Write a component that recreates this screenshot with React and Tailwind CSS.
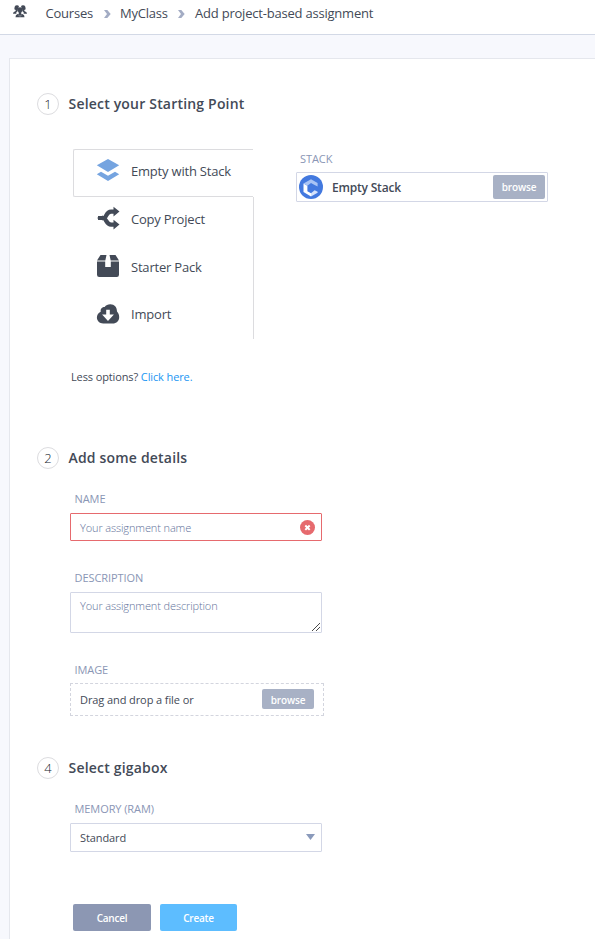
import React from 'react';

function UsersIcon() {
  return (
    <svg className="h-[13px] w-[14px]" viewBox="0 0 42 39" fill="#434a57">
      <path d="M5 5q2-4 7-4 5 0 6 4l-3 6-1 8-4 3v4H0q0-5 4-6l4-2v-3l-4-2z" />
      <path d="M37 5q-2-4-7-4-5 0-6 4l3 6 1 8 4 3v4h10q0-5-4-6l-4-2v-3l4-2z" />
      <path d="M21 7c5 0 7 3 7 8 0 4-2 6-3.500 8v3l5 2q5 2 5 9h-27q0-7 5-9l5-2v-3C16 21 14 19 14 15c0-5 2-8 7-8z" />
      <path d="m16 27 3.500 4-1 6zM26 27l-3.500 4 1 6z" fill="#fff" opacity=".6" />
    </svg>
  );
}

function Chevron() {
  return (
    <svg className="mt-px h-[8px] w-[7px] shrink-0" viewBox="0 0 7 8" fill="#a3acc4">
      <path d="M0 0h3.300l3.400 4-3.400 4H0l3-4z" />
    </svg>
  );
}

function LayersIcon() {
  return (
    <svg className="-mt-[2px] size-6" viewBox="0 0 24 24" fill="#75a4e0">
      <path d="M12 1 23.200 7.300 12 14 .800 7.300z" />
      <path d="m.800 16.200 4.200-2.500L12 17.700l7-4 4.200 2.500L12 23z" />
    </svg>
  );
}

function ForkIcon() {
  return (
    <svg className="-mt-[2px] size-6" viewBox="0 0 24 24">
      <path
        d="M2 12h5.500C10.500 12 10 5.600 15 5.600h4M7 12c3.500 0 3 6.600 8 6.600h4"
        fill="none"
        stroke="#434a57"
        strokeWidth="4.200"
      />
      <path d="M17.500 0.700 23.500 5.600 17.500 10.500zM17.500 13.700 23.500 18.600 17.500 23.400zM0.800 12 7 9.500v5z" fill="#434a57" />
    </svg>
  );
}

function PackIcon() {
  return (
    <svg className="-mt-[2px] size-6" viewBox="0 0 24 24" fill="#434a57">
      <path d="M4.500 1h6L9.300 6.500H1zM13.500 1h6L23 6.500h-8.300z" />
      <path d="M1 7.600h8.200v5.300h5.600V7.600H23v13.200q0 2.200-2.200 2.200H3.200Q1 23 1 20.800z" />
    </svg>
  );
}

function ImportIcon() {
  return (
    <svg className="size-6" viewBox="0 0 24 24">
      <path
        d="M14.300 2.200c4.200 0 6.700 3 6.700 7.300 1.400 1.500 2.200 3.300 2.200 5.400 0 3.900-2.600 6.600-6.600 6.600H7.200C3.500 21.500.9 19 .9 15.600c0-2.800 1.500-5 3.800-5.900C4.300 6.500 6.200 5 8.600 5c1.300-1.900 3.300-2.800 5.700-2.800z"
        fill="#434a57"
      />
      <path d="M10.200 7.800h3.600v4.600h4.100L12 19l-5.900-6.600h4.100z" fill="#fff" />
    </svg>
  );
}

function StackLogo() {
  return (
    <svg className="size-6 shrink-0" viewBox="0 0 24 24">
      <circle cx="12" cy="12" r="12" fill="#4379df" />
      <path d="m4.500 8.500 3.900 2.200v5.500l3.600 2v3.200l-7.500-4.300z" fill="#fff" />
      <path d="M12 4.200 18.600 8v3.500l-3-1.600L12 8l-3.600 2.700-3.900-2.200z" fill="#a9c4f5" />
      <path d="m12 18.200 3.600-3 3 1.500v1L12 21.400z" fill="#d5e2fb" />
    </svg>
  );
}

function SectionTitle({ number, children }) {
  return (
    <div className="flex h-[22px] items-center">
      <span className="flex size-[22px] items-center justify-center rounded-full border border-[#dcdcdf] pt-px text-[13px] leading-none font-light text-[#20242c]">
        {number}
      </span>
      <h2 className="ml-[9.500px] text-[14px] leading-[22px] font-semibold tracking-[0.190px] text-[#434a57]">
        {children}
      </h2>
    </div>
  );
}

function Label({ children, className = 'pl-[4.500px]' }) {
  return <div className={`h-4 text-[11px] leading-4 tracking-[-0.080px] text-[#8a96b5] ${className}`}>{children}</div>;
}

function Browse({ className }) {
  return (
    <button
      className={`w-[52px] rounded-[2px] bg-[#a8b1c5] text-[10px] font-semibold tracking-[-0.150px] text-white ${className}`}
    >
      browse
    </button>
  );
}

const options = [
  { label: 'Empty with Stack', Icon: LayersIcon, className: 'h-12 w-[180px] rounded-l-[2px] border-y border-l border-[#dcdcdf] pl-[22px] pb-1' },
  { label: 'Copy Project', Icon: ForkIcon, className: 'h-12 w-[181px] border-r border-[#dcdcdf] pl-[23px] pb-1' },
  { label: 'Starter Pack', Icon: PackIcon, className: 'h-[47px] w-[181px] border-r border-[#dcdcdf] pl-[23px] pb-1' },
  { label: 'Import', Icon: ImportIcon, className: 'h-[47px] w-[181px] border-r border-[#dcdcdf] pl-[23px] pb-1' },
];

export default function App() {
  return (
    <div className="flex h-[939px] w-[595px] flex-col overflow-hidden bg-[#f7f8fd] font-['Open_Sans','Noto_Sans',sans-serif] text-[#434a57]">
      <header className="flex h-[35px] shrink-0 items-start border-b border-[#d3d9e6] bg-white pl-[13px] text-[13px]">
        <div className="pt-[5px]">
          <UsersIcon />
        </div>
        <nav className="ml-[18.500px] flex h-[27px] items-center tracking-[-0.210px] whitespace-nowrap">
          <span className="w-[58px]">Courses</span>
          <Chevron />
          <span className="ml-[9.500px] w-[58px]">MyClass</span>
          <Chevron />
          <span className="ml-[10px]">Add project-based assignment</span>
        </nav>
      </header>

      <main className="mt-[23px] ml-[9px] flex-1 border-t border-l border-[#e5e7ed] bg-white pt-[34px] pl-[27px]">
        <SectionTitle number="1">Select your Starting Point</SectionTitle>

        <div className="mt-[34px] ml-9 flex">
          <div>
            {options.map(({ label, Icon, className }) => (
              <div key={label} className={`flex items-center text-[13px] tracking-[-0.200px] ${className}`}>
                <Icon />
                <span className="ml-[11px] pt-[2px] whitespace-nowrap">{label}</span>
              </div>
            ))}
          </div>
          <div className="ml-[42px] w-[252px] pt-[2px]">
            <Label className="pl-1">STACK</Label>
            <div className="mt-[5px] flex h-[30px] items-center rounded-[1px] border border-[#d3d7e6] pr-[2px] pl-[1.500px]">
              <StackLogo />
              <span className="ml-[9.500px] flex-1 pt-[2px] text-[12px] font-semibold tracking-[-0.200px]">
                Empty Stack
              </span>
              <Browse className="h-6 leading-6" />
            </div>
          </div>
        </div>

        <p className="mt-[30px] ml-[34px] h-4 text-[11px] leading-4 tracking-[-0.120px]">
          Less options? <a className="text-[#2196f3]">Click here.</a>
        </p>

        <div className="mt-[62px]">
          <SectionTitle number="2">Add some details</SectionTitle>
        </div>
        <div className="ml-[33px] w-[252px] pt-[22px]">
          <Label>NAME</Label>
          <div className="mt-[6px] flex h-7 items-center justify-between rounded-[1px] border border-[#e66a6e] pr-[6px] pl-[9px] text-[11px] font-light tracking-[-0.120px] text-[#63729a]">
            <span className="pt-[2px]">Your assignment name</span>
            <svg className="size-[15px]" viewBox="0 0 15 15">
              <circle cx="7.500" cy="7.500" r="7.500" fill="#e66a6e" />
              <path d="m5.300 5.500 4.400 4.400m0-4.400L5.300 9.900" stroke="#fff" strokeWidth="2" />
            </svg>
          </div>

          <div className="mt-[29px]">
            <Label>DESCRIPTION</Label>
          </div>
          <div className="mt-[6px] flex h-[41px] items-end justify-between rounded-[1px] border border-[#d3d7e6] pr-[1px] pb-[1px] pl-[9px] text-[11px] font-light tracking-[-0.120px] text-[#63729a]">
            <span className="h-[33px] leading-4">Your assignment description</span>
            <svg className="size-[8px]" viewBox="0 0 8 8" stroke="#4a4a4a" strokeWidth="1">
              <path d="M0 8 8 0M4 8 8 4" />
            </svg>
          </div>

          <div className="mt-[29px]">
            <Label>IMAGE</Label>
          </div>
          <div className="mt-[5px] flex h-[33px] w-[254px] items-center justify-between border border-dashed border-[#d3d5de] pr-[9px] pb-[1px] pl-[9px] text-[11px] tracking-[-0.090px]">
            <span className="pt-[2px]">Drag and drop a file or</span>
            <Browse className="h-5 leading-[22px]" />
          </div>
        </div>

        <div className="mt-[41px]">
          <SectionTitle number="4">Select gigabox</SectionTitle>
        </div>
        <div className="ml-[33px] w-[252px] pt-[22px]">
          <Label>MEMORY (RAM)</Label>
          <div className="mt-[6px] flex h-[29px] items-center justify-between rounded-[1px] border border-[#d3d7e6] pr-[6px] pl-[9px] text-[11px] tracking-[-0.090px]">
            <span className="pt-[2px]">Standard</span>
            <svg className="mb-px h-[6px] w-[9px]" viewBox="0 0 9 6" fill="#8a9abb">
              <path d="M0 0h9L4.500 6z" />
            </svg>
          </div>
        </div>

        <div className="mt-[52px] ml-9 flex gap-[9px] text-[10px] font-semibold tracking-[-0.250px] text-white">
          <button className="h-[27px] w-[78px] rounded-[2px] bg-[#8c97b3] pt-[1px]">Cancel</button>
          <button className="h-[27px] w-[77px] rounded-[2px] bg-[#5dbdff] pt-[1px]">Create</button>
        </div>
      </main>
    </div>
  );
}
